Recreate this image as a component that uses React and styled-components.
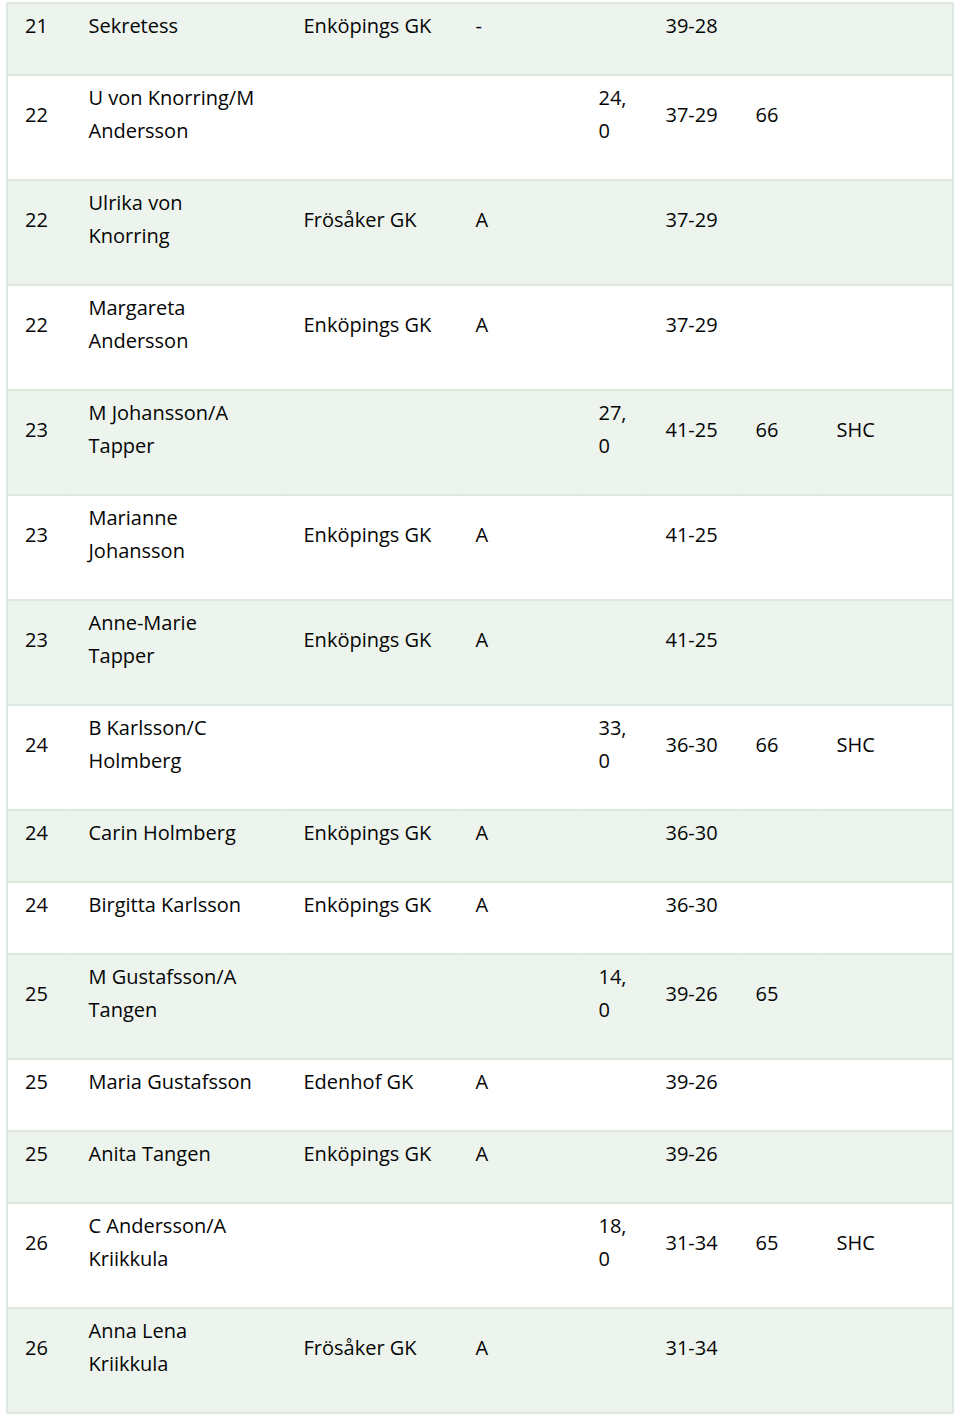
import React from "react";
import styled, { createGlobalStyle } from "styled-components";

const GlobalStyle = createGlobalStyle`
  html, body {
    margin: 0;
    padding: 0;
    background: #ffffff;
  }
  body {
    font-family: "Open Sans", "Liberation Sans", sans-serif;
    color: #050505;
  }
`;

const Page = styled.div`
  padding: 2px 6px 4px 6px;
`;

const Table = styled.table`
  width: 948px;
  border-collapse: collapse;
  table-layout: fixed;
  border: 2px solid #dde9de;
  font-size: 20px;
  line-height: 33px;
`;

const Row = styled.tr`
  background: ${(p) => (p.$shaded ? "#ecf4ed" : "#ffffff")};
  border-bottom: 2px solid #dde9de;
`;

const Cell = styled.td`
  padding: 5px 17px 32px 18px;
  vertical-align: middle;
  text-align: left;
  border-left: 1px solid ${(p) => (p.$shaded ? "#e9f1ea" : "#ffffff")};
  overflow-wrap: normal;
  &:first-child {
    padding-left: 17px;
    border-left: none;
  }
`;

const widths = [63, 215, 172, 123, 67, 90, 81, 135];

const rows = [
  ["21", "Sekretess", "Enköpings GK", "-", "", "39-28", "", ""],
  ["22", "U von Knorring/M Andersson", "", "", "24, 0", "37-29", "66", ""],
  ["22", "Ulrika von Knorring", "Frösåker GK", "A", "", "37-29", "", ""],
  ["22", "Margareta Andersson", "Enköpings GK", "A", "", "37-29", "", ""],
  ["23", "M Johansson/A Tapper", "", "", "27, 0", "41-25", "66", "SHC"],
  ["23", "Marianne Johansson", "Enköpings GK", "A", "", "41-25", "", ""],
  ["23", "Anne-Marie Tapper", "Enköpings GK", "A", "", "41-25", "", ""],
  ["24", "B Karlsson/C Holmberg", "", "", "33, 0", "36-30", "66", "SHC"],
  ["24", "Carin Holmberg", "Enköpings GK", "A", "", "36-30", "", ""],
  ["24", "Birgitta Karlsson", "Enköpings GK", "A", "", "36-30", "", ""],
  ["25", "M Gustafsson/A Tangen", "", "", "14, 0", "39-26", "65", ""],
  ["25", "Maria Gustafsson", "Edenhof GK", "A", "", "39-26", "", ""],
  ["25", "Anita Tangen", "Enköpings GK", "A", "", "39-26", "", ""],
  ["26", "C Andersson/A Kriikkula", "", "", "18, 0", "31-34", "65", "SHC"],
  ["26", "Anna Lena Kriikkula", "Frösåker GK", "A", "", "31-34", "", ""],
];

export default function App() {
  return (
    <>
      <GlobalStyle />
      <Page>
        <Table>
          <colgroup>
            {widths.map((w, i) => (
              <col key={i} style={{ width: w }} />
            ))}
          </colgroup>
          <tbody>
            {rows.map((r, i) => {
              const shaded = i % 2 === 0;
              return (
                <Row key={i} $shaded={shaded}>
                  {r.map((c, j) => (
                    <Cell key={j} $shaded={shaded}>
                      {c}
                    </Cell>
                  ))}
                </Row>
              );
            })}
          </tbody>
        </Table>
      </Page>
    </>
  );
}
